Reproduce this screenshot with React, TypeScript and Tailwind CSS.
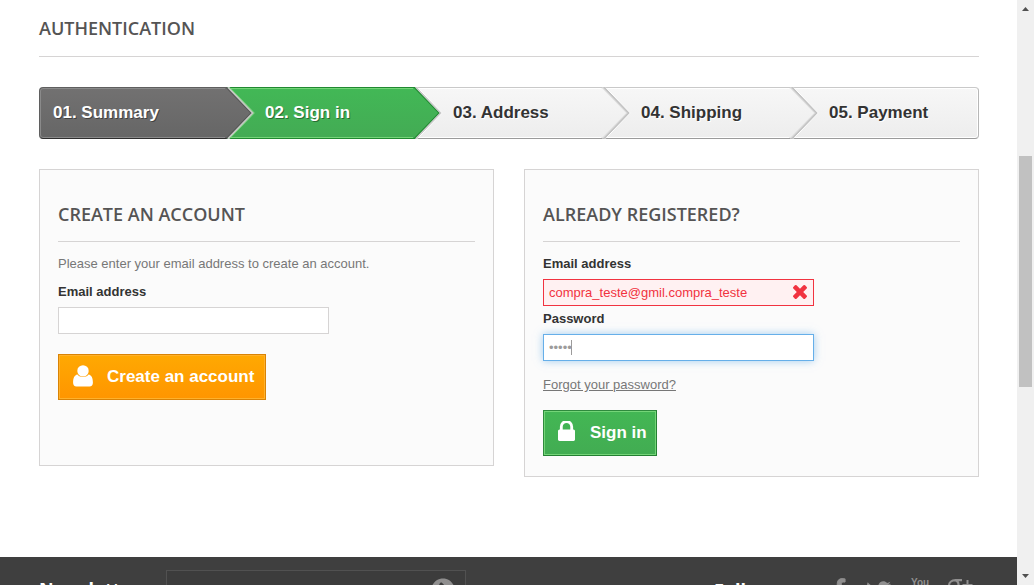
import { useState } from "react";
import { FaFacebookF, FaTwitter, FaChevronCircleRight } from "react-icons/fa";

const steps = ["01. Summary", "02. Sign in", "03. Address", "04. Shipping", "05. Payment"];

const stepStyles = {
  done: "bg-linear-to-b from-[#727171] to-[#666666] border-t-[#5f5f5f] border-b-[#2e2e2e] text-white [text-shadow:1px_1px_rgba(0,0,0,0.4)] inset-shadow-[0_0_0_1px_#8a8a8a]",
  current:
    "bg-linear-to-b from-[#42b856] to-[#43ab54] border-t-[#208931] border-b-[#208931] text-white [text-shadow:1px_1px_rgba(0,0,0,0.4)] inset-shadow-[0_0_0_1px_#74d578]",
  todo: "bg-linear-to-b from-[#f7f7f7] to-[#ededed] border-t-[#c9c9c9] border-b-[#9b9b9b] text-[#333333] [text-shadow:1px_1px_#ffffff] inset-shadow-[0_0_0_1px_#ffffff]",
};

const chevrons = {
  done: { id: "chevron-done", top: "#727171", bottom: "#666666", inner: "#555555", line: "#c4c8c4", outer: "#74d578" },
  current: { id: "chevron-current", top: "#42b856", bottom: "#43ab54", inner: "#208931", line: "#cbcbcb", outer: "#ffffff" },
  todo: { id: "chevron-todo", top: "#f7f7f7", bottom: "#ededed", inner: "#dddddd", line: "#c3c3c3", outer: "#ffffff" },
};

function Chevron({ kind }: { kind: keyof typeof chevrons }) {
  const c = chevrons[kind];
  return (
    <svg className="absolute -top-px -right-[28px] z-10 h-[52px] w-[30px]" viewBox="0 0 30 52" aria-hidden="true">
      <defs>
        <linearGradient id={c.id} x1="0" y1="0" x2="0" y2="1">
          <stop offset="0" stopColor={c.top} />
          <stop offset="1" stopColor={c.bottom} />
        </linearGradient>
      </defs>
      <path d="M0 1H3L27 26L3 51H0Z" fill={`url(#${c.id})`} />
      <path d="M1.500 0.500L26.200 26L1.500 51.500" fill="none" stroke={c.inner} strokeWidth="1.300" />
      <path d="M3 0L28 26L3 52" fill="none" stroke={c.line} strokeWidth="2" />
      <path d="M4.900 0.700L29.300 26L4.900 51.300" fill="none" stroke={c.outer} />
    </svg>
  );
}

function UserIcon() {
  return (
    <svg className="mb-[2px] h-[22px] w-[20px]" viewBox="0 0 20 22" fill="currentColor" aria-hidden="true">
      <circle cx="10" cy="5.900" r="5.700" />
      <path d="M4.400 9.500C5.900 11.300 7.900 12 10 12S14.100 11.300 15.600 9.500C18.700 10.200 19.900 13 19.900 17.800C19.900 20 18.700 21.600 16.600 21.600H3.400C1.300 21.600 .1 20 .1 17.800C.1 13 1.300 10.200 4.400 9.500Z" />
    </svg>
  );
}

function LockIcon() {
  return (
    <svg className="mb-[4px] h-[20px] w-[17px]" viewBox="0 192 1152 1344" preserveAspectRatio="none" fill="currentColor" aria-hidden="true">
      <path d="M320 768h512v-192q0-106-75-181t-181-75-181 75-75 181v192zm832 96v576q0 40-28 68t-68 28h-960q-40 0-68-28t-28-68v-576q0-40 28-68t68-28h32v-192q0-184 132-316t316-132 316 132 132 316v192h32q40 0 68 28t28 68z" />
    </svg>
  );
}

function CrossIcon() {
  return (
    <svg className="absolute top-[6px] right-[7px] size-[14px] text-[#f13340]" viewBox="302 366 1188 1188" fill="currentColor" aria-hidden="true">
      <path d="M1490 1322q0 40-28 68l-136 136q-28 28-68 28t-68-28l-294-294-294 294q-28 28-68 28t-68-28l-136-136q-28-28-28-68t28-68l294-294-294-294q-28-28-28-68t28-68l136-136q28-28 68-28t68 28l294 294 294-294q28-28 68-28t68 28l136 136q28 28 28 68t-28 68l-294 294 294 294q28 28 28 68z" />
    </svg>
  );
}

function GooglePlusIcon() {
  return (
    <svg className="h-[24px] w-[26px]" viewBox="0 0 26 24" fill="none" stroke="currentColor" aria-hidden="true">
      <path d="M15 1.200H8.500C4.500 1.200 2 3.600 2 6.600C2 9.300 4 11 7 11C10 11 11.600 9 11.600 6.300C11.600 3.500 10 1.600 8 1.200" strokeWidth="2.200" />
      <path d="M8.500 11C7.500 12.500 8 13.500 10 14.800C12.300 16.300 13 17.500 13 19C13 21.300 10.800 22.800 7.300 22.800C3.800 22.800 1.500 21.500 1.500 19.200C1.500 16.800 4 15.400 9 15.300" strokeWidth="2" />
      <path d="M20.500 1V11M15.500 6H25.500" strokeWidth="2" />
    </svg>
  );
}

function StepBar() {
  return (
    <ol className="mt-[30px] grid grid-cols-5 text-[17px] leading-[22px] font-bold">
      {steps.map((label, i) => {
        const kind = i === 0 ? "done" : i === 1 ? "current" : "todo";
        const edge =
          i === 0
            ? "rounded-l-[4px] border-l border-l-[#5f5f5f] pl-[13px]"
            : i === steps.length - 1
              ? "rounded-r-[4px] border-r border-r-[#b7b7b7] pl-[38px]"
              : "pl-[38px]";
        return (
          <li
            key={label}
            aria-current={i === 1 ? "step" : undefined}
            className={`relative h-[52px] border-y pt-[14px] ${stepStyles[kind]} ${edge}`}
          >
            {label}
            {i < steps.length - 1 && <Chevron kind={kind} />}
          </li>
        );
      })}
    </ol>
  );
}

const cardTitle =
  "mb-[13px] border-b border-[#d6d4d4] pb-[16px] font-['Open_Sans',sans-serif] text-[18px] leading-[22px] font-semibold text-[#555454] uppercase";
const field = "block h-[27px] w-full border px-[5px] text-[13px] outline-none";

export default function App() {
  const [newEmail, setNewEmail] = useState("");
  const [email, setEmail] = useState("compra_teste@gmil.compra_teste");
  const [password, setPassword] = useState("teste");

  return (
    <div className="flex h-screen overflow-hidden bg-white font-['Liberation_Sans',Arial,sans-serif] text-[13px] leading-[18px] text-[#777777]">
      <div className="min-w-0 flex-1 overflow-hidden">
        <main className="pt-[17px] pr-[38px] pb-[80px] pl-[39px]">
          <h1 className="border-b border-[#d6d4d4] pb-[17px] font-['Open_Sans',sans-serif] text-[18px] leading-[22px] font-semibold text-[#555454] uppercase">
            Authentication
          </h1>
          <StepBar />
          <div className="mt-[30px] grid grid-cols-2 items-start gap-[30px]">
            <form className="border border-[#d6d4d4] bg-[#fbfbfb] px-[18px] pt-[33px] pb-[65px]" onSubmit={(e) => e.preventDefault()}>
              <h2 className={cardTitle}>Create an account</h2>
              <p className="mb-[10px]">Please enter your email address to create an account.</p>
              <label htmlFor="new-email" className="mb-[6px] block font-bold text-[#333333]">
                Email address
              </label>
              <div className="max-w-[271px]">
                <input
                  id="new-email"
                  type="email"
                  value={newEmail}
                  onChange={(e) => setNewEmail(e.target.value)}
                  className={`${field} border-[#d6d4d4] bg-white`}
                />
              </div>
              <button
                type="submit"
                className="mt-[20px] flex h-[46px] items-center gap-[14px] border border-[#d98305] bg-linear-to-b from-[#ffa902] to-[#ff9500] pr-[11px] pl-[14px] text-[17px] leading-[22px] font-bold text-white inset-shadow-[0_0_0_1px_#ffb12b]"
              >
                <UserIcon />
                Create an account
              </button>
            </form>
            <form className="border border-[#d6d4d4] bg-[#fbfbfb] px-[18px] pt-[33px] pb-[20px]" onSubmit={(e) => e.preventDefault()}>
              <h2 className={cardTitle}>Already registered?</h2>
              <label htmlFor="email" className="mb-[6px] block font-bold text-[#333333]">
                Email address
              </label>
              <div className="relative max-w-[271px]">
                <input
                  id="email"
                  type="email"
                  aria-invalid="true"
                  value={email}
                  onChange={(e) => setEmail(e.target.value)}
                  className={`${field} border-[#f13340] bg-[#fff1f2] pr-[30px] text-[#f13340]`}
                />
                <CrossIcon />
              </div>
              <label htmlFor="password" className="mt-[4px] mb-[6px] block font-bold text-[#333333]">
                Password
              </label>
              <div className="relative max-w-[271px]">
                <input
                  id="password"
                  type="password"
                  value={password}
                  onChange={(e) => setPassword(e.target.value)}
                  className={`${field} border-[#66afe9] bg-white text-[#9c9b9b] shadow-[0_0_8px_rgba(102,175,233,0.6)]`}
                />
                <span className="absolute top-[6px] left-[28px] h-[15px] w-px bg-[#9c9b9b]" />
              </div>
              <a href="#forgot" className="mt-[15px] block w-fit underline">
                Forgot your password?
              </a>
              <button
                type="submit"
                className="mt-[16px] flex h-[46px] items-center gap-[15px] border border-[#2f8a3d] border-r-[#247f32] border-b-[#247f32] bg-linear-to-b from-[#43b754] to-[#42ac52] pr-[9px] pl-[14px] text-[17px] leading-[22px] font-bold text-white inset-shadow-[0_0_0_1px_#74d578]"
              >
                <LockIcon />
                Sign in
              </button>
            </form>
          </div>
        </main>
        <footer className="flex justify-between bg-[#3f3f3f] pt-[13px] pr-[44px] pb-[40px] pl-[39px] text-white">
          <form className="flex" onSubmit={(e) => e.preventDefault()}>
            <label htmlFor="newsletter" className="w-[127px] pt-[8px] font-['Open_Sans',sans-serif] text-[18px] leading-[22px] font-bold">
              Newsletter
            </label>
            <div className="relative">
              <input id="newsletter" type="email" className="h-[45px] w-[300px] border border-[#515151] bg-[#3c3c3c] px-[12px] outline-none" />
              <button type="submit" aria-label="Subscribe" className="absolute top-[8px] right-[11px] text-[24px] text-[#908f8f]">
                <FaChevronCircleRight />
              </button>
            </div>
          </form>
          <div className="flex items-start text-[#908f8f]">
            <h2 className="w-[119px] pt-[9px] font-['Open_Sans',sans-serif] text-[18px] leading-[22px] font-bold text-white">Follow us</h2>
            <div className="flex items-start gap-[20px] pt-[8px]">
              <a href="#facebook" aria-label="Facebook">
                <FaFacebookF className="h-[22px] w-[13px]" stroke="currentColor" strokeWidth="24" />
              </a>
              <a href="#twitter" aria-label="Twitter" className="pt-px">
                <FaTwitter className="size-[25px]" />
              </a>
              <a href="#youtube" aria-label="YouTube" className="w-[16px] font-['Liberation_Sans_Narrow','Liberation_Sans',sans-serif] text-[10px] leading-[10px] font-bold">
                You
              </a>
              <a href="#google" aria-label="Google Plus" className="pt-px">
                <GooglePlusIcon />
              </a>
            </div>
          </div>
        </footer>
      </div>
      <div className="flex w-[17px] shrink-0 flex-col items-center justify-between bg-[#f0f0f0]" aria-hidden="true">
        <svg className="mt-[7px] h-[4px] w-[7px]" viewBox="0 0 7 4">
          <path d="M3.500 0L7 4H0Z" fill="#505050" />
        </svg>
        <div className="flex w-full flex-1 flex-col items-center">
          <div className="flex-[145]" />
          <div className="w-[13px] flex-[231] bg-[#c1c1c1]" />
          <div className="flex-[187]" />
        </div>
        <svg className="mb-[7px] h-[4px] w-[7px]" viewBox="0 0 7 4">
          <path d="M0 0H7L3.500 4Z" fill="#505050" />
        </svg>
      </div>
    </div>
  );
}
